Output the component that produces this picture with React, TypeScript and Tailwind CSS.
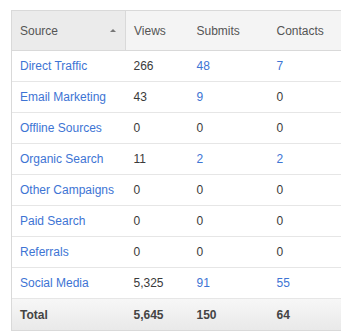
interface SourceRow {
  name: string
  views: string
  submits: string
  contacts: string
}

const rows: SourceRow[] = [
  { name: 'Direct Traffic', views: '266', submits: '48', contacts: '7' },
  { name: 'Email Marketing', views: '43', submits: '9', contacts: '0' },
  { name: 'Offline Sources', views: '0', submits: '0', contacts: '0' },
  { name: 'Organic Search', views: '11', submits: '2', contacts: '2' },
  { name: 'Other Campaigns', views: '0', submits: '0', contacts: '0' },
  { name: 'Paid Search', views: '0', submits: '0', contacts: '0' },
  { name: 'Referrals', views: '0', submits: '0', contacts: '0' },
  { name: 'Social Media', views: '5,325', submits: '91', contacts: '55' },
]

// non-zero counts render as links
function Count({ value, link }: { value: string; link?: boolean }) {
  if (link && value !== '0') {
    return <span className="text-[#3d74d4]">{value}</span>
  }
  return <span className="text-[#3a3a3a]">{value}</span>
}

export default function App() {
  return (
    <div className="w-[341px] h-[331px] bg-white pt-[10px] pl-[11px] font-['Liberation_Sans',Arial,sans-serif] text-[12px] overflow-hidden">
      <table className="w-[330px] border-collapse table-fixed">
        <colgroup>
          <col className="w-[114px]" />
          <col className="w-[63px]" />
          <col className="w-[80px]" />
          <col />
        </colgroup>
        <thead>
          <tr className="h-[40px] border-t border-b border-[#d9d9d9] text-[#555]">
            <th className="bg-[#ebebeb] border-l border-r border-[#d9d9d9] pl-2 pr-[9px] text-left font-normal">
              <div className="flex items-center justify-between">
                <span>Source</span>
                <span className="w-0 h-0 border-l-[3px] border-r-[3px] border-b-[3px] border-l-transparent border-r-transparent border-b-[#777]" />
              </div>
            </th>
            <th className="bg-[#f4f4f4] pl-2 text-left font-normal">Views</th>
            <th className="bg-[#f4f4f4] pl-2 text-left font-normal">Submits</th>
            <th className="bg-[#f4f4f4] pl-2 text-left font-normal">Contacts</th>
          </tr>
        </thead>
        <tbody>
          {rows.map((row) => (
            <tr key={row.name} className="h-[31px] border-b border-[#e6e6e6]">
              <td className="border-l border-[#d9d9d9] pl-2 text-[#3d74d4]">{row.name}</td>
              <td className="pl-2">
                <Count value={row.views} />
              </td>
              <td className="pl-2">
                <Count value={row.submits} link />
              </td>
              <td className="pl-2">
                <Count value={row.contacts} link />
              </td>
            </tr>
          ))}
          <tr className="h-[32px] border-b border-[#d9d9d9] bg-gradient-to-b from-[#f7f7f7] to-[#e9e9e9] font-bold text-[#444]">
            <td className="border-l border-[#d9d9d9] pl-2">Total</td>
            <td className="pl-2">5,645</td>
            <td className="pl-2">150</td>
            <td className="pl-2">64</td>
          </tr>
        </tbody>
      </table>
    </div>
  )
}
